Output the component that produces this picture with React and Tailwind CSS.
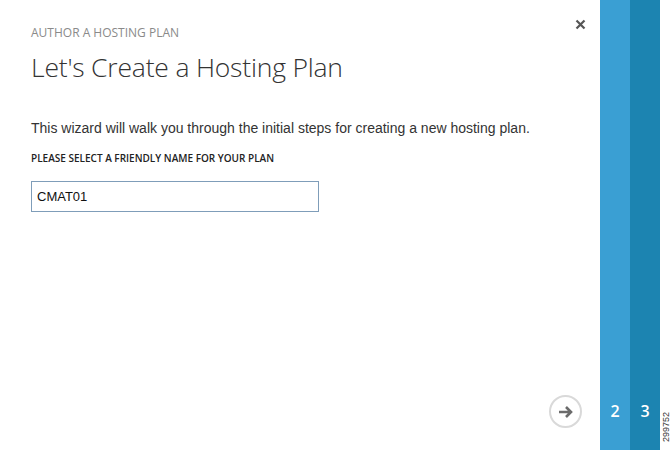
import React from 'react';

export default function App() {
  return (
    <div className="flex h-[450px] w-[672px] overflow-hidden bg-white">
      <div className="relative flex w-[600px] flex-col px-[31px] pt-[26px]" style={{ fontFamily: '"Open Sans", sans-serif' }}>
        <div className="text-[12px] leading-[14px] text-[#8a8a8a]">AUTHOR A HOSTING PLAN</div>
        <h1 className="mt-[10px] text-[26.5px] font-light leading-[34px] tracking-[-0.2px] text-[#333]">
          Let's Create a Hosting Plan
        </h1>
        <p
          className="mt-[36px] text-[14px] leading-[16px] text-[#333]"
          style={{ fontFamily: '"Liberation Sans", Arial, sans-serif' }}
        >
          This wizard will walk you through the initial steps for creating a new hosting plan.
        </p>
        <div className="mt-[16px] text-[10px] font-semibold leading-[12px] text-[#222]">
          PLEASE SELECT A FRIENDLY NAME FOR YOUR PLAN
        </div>
        <input
          readOnly
          value="CMAT01"
          className="mt-[17px] h-[31px] w-[288px] border border-[#7f9db9] px-[5px] text-[13px] text-[#111] outline-none"
          style={{ fontFamily: '"Liberation Sans", Arial, sans-serif' }}
        />
        <button className="absolute right-[14px] top-[19px] text-[#555]">
          <svg width="11" height="11" viewBox="0 0 11 11">
            <path d="M1.5 1.5 L9.5 9.5 M9.5 1.5 L1.5 9.5" stroke="#555" strokeWidth="2.2" />
          </svg>
        </button>
        <div className="mt-auto mb-[22px] mr-[-13px] flex justify-end">
          <div className="flex h-[33px] w-[33px] items-center justify-center rounded-full border-2 border-[#d9d9d9]">
            <svg width="16" height="14" viewBox="0 0 16 14">
              <path d="M1 7 H13 M8 2 L13 7 L8 12" fill="none" stroke="#6b6b6b" strokeWidth="2.6" />
            </svg>
          </div>
        </div>
      </div>
      <div
        className="flex w-[30px] flex-col items-center justify-end bg-[#3a9fd3] pb-[27px] text-[16px] font-semibold text-white"
        style={{ fontFamily: '"Open Sans", sans-serif' }}
      >
        2
      </div>
      <div
        className="flex w-[30px] flex-col items-center justify-end bg-[#1c84b1] pb-[27px] text-[16px] font-semibold text-white"
        style={{ fontFamily: '"Open Sans", sans-serif' }}
      >
        3
      </div>
      <div className="flex w-[12px] flex-col items-center justify-end pb-[8px]">
        <span
          className="text-[9px] leading-[10px] text-[#333]"
          style={{ writingMode: 'vertical-rl', transform: 'rotate(180deg)', fontFamily: '"Liberation Sans", Arial, sans-serif' }}
        >
          299752
        </span>
      </div>
    </div>
  );
}
